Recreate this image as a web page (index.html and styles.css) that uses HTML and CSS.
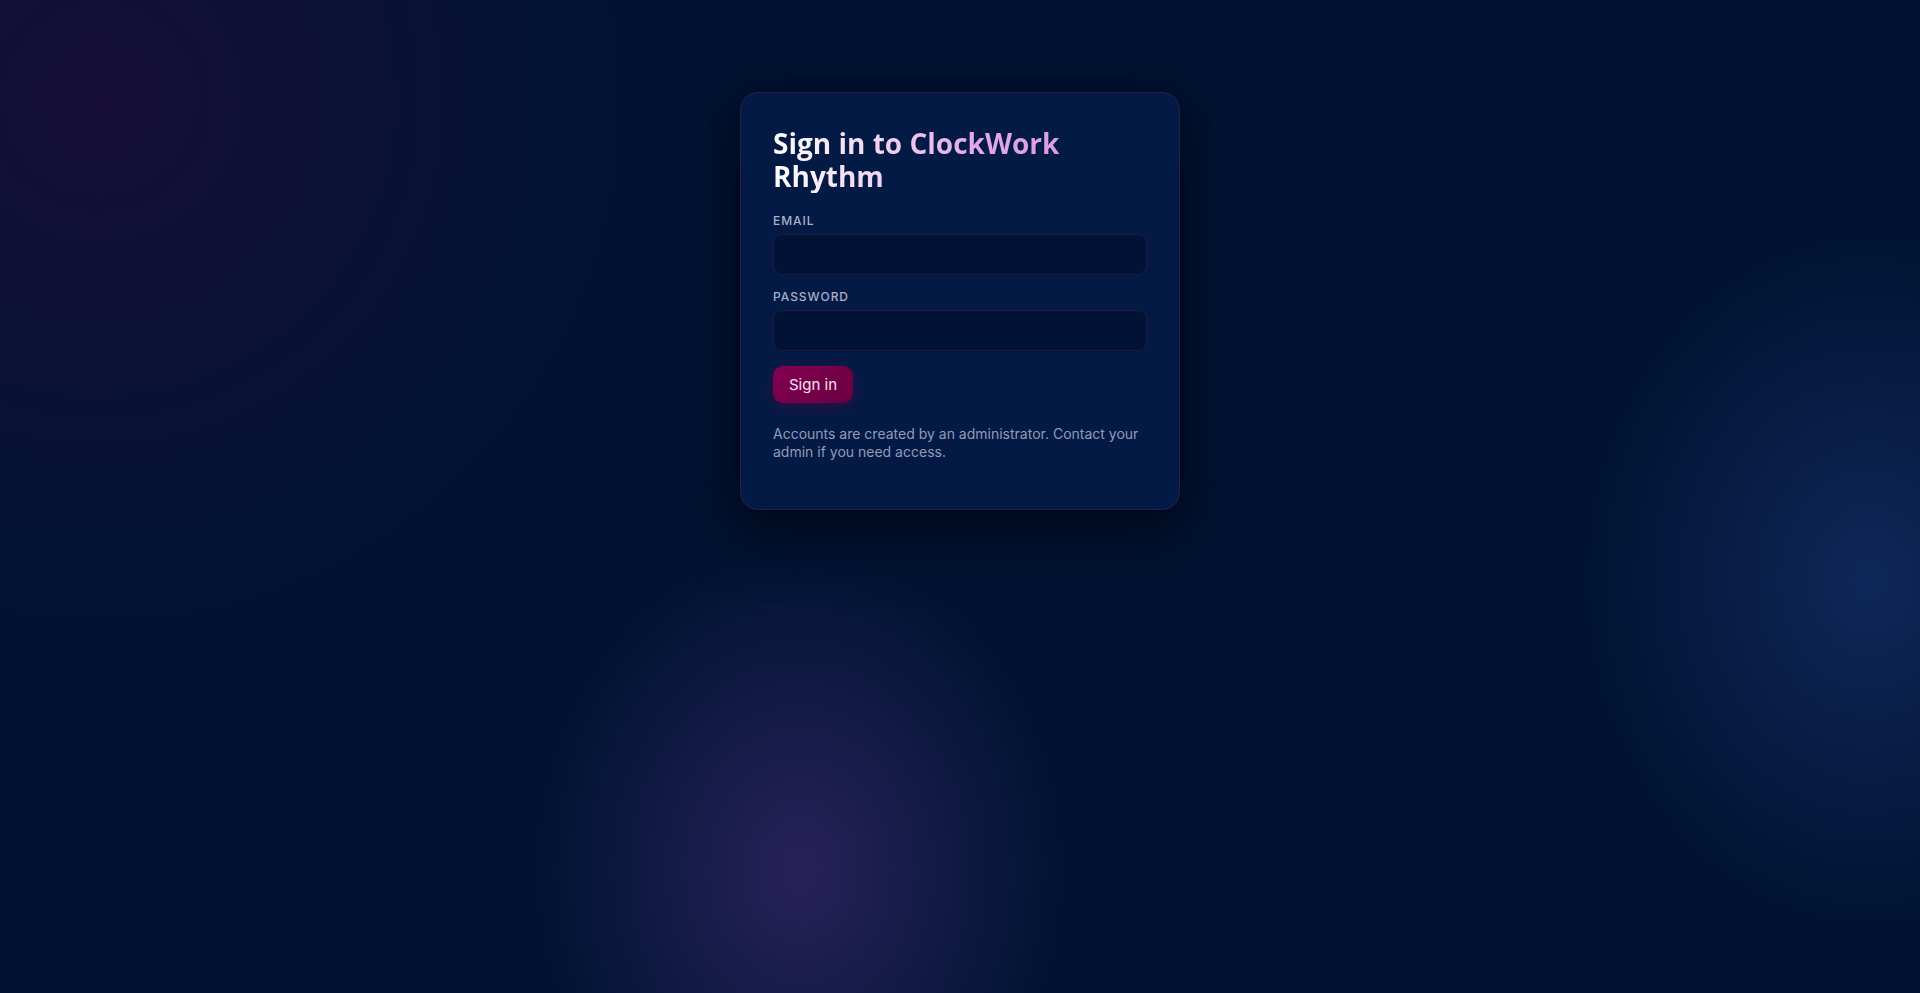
FILE: index.html
```html
<!DOCTYPE html>
<html lang="en">
<head>
<meta charset="utf-8">
<title>Sign in – ClockWork Rhythm</title>
<link rel="stylesheet" href="styles.css">
</head>
<body>
<main class="page">
  <form class="card">
    <h1 class="title">Sign in to ClockWork Rhythm</h1>
    <label class="field">
      <span class="label">EMAIL</span>
      <input class="input" type="email">
    </label>
    <label class="field">
      <span class="label">PASSWORD</span>
      <input class="input" type="password">
    </label>
    <button class="btn" type="button">Sign in</button>
    <p class="note">Accounts are created by an administrator. Contact your admin if you need access.</p>
  </form>
</main>
</body>
</html>
```

FILE: styles.css
```css
* { box-sizing: border-box; }
html, body { margin: 0; height: 100%; }
body {
  background-color: #001432;
  background-image:
    radial-gradient(ellipse 260px 320px at 800px 870px, rgba(42, 34, 92, 0.95), rgba(42, 34, 92, 0) 100%),
    radial-gradient(ellipse 280px 340px at 1870px 580px, rgba(16, 40, 92, 0.95), rgba(16, 40, 92, 0) 100%),
    radial-gradient(ellipse 520px 520px at 100px 100px, rgba(24, 14, 54, 0.95), rgba(24, 14, 54, 0) 100%);
  font-family: Inter, "Noto Sans", sans-serif;
  color: #e6e9f5;
  overflow: hidden;
}
.page {
  display: flex;
  justify-content: center;
  align-items: flex-start;
  padding-top: 92px;
  min-height: 100%;
}
.card {
  width: 440px;
  padding: 32px 32px 48px;
  border-radius: 18px;
  background: #031a45;
  border: 1px solid rgba(150, 40, 130, 0.22);
  box-shadow: 0 24px 60px rgba(0, 4, 18, 0.7), 0 0 30px rgba(0, 4, 18, 0.4);
  display: flex;
  flex-direction: column;
}
.title {
  margin: 0 0 20px;
  font-family: "Open Sans", sans-serif;
  font-weight: 700;
  font-size: 28px;
  line-height: 33px;
  background: linear-gradient(90deg, #ffffff 0%, #f3d8f3 25%, #e2a8e6 55%, #d99be0 80%);
  -webkit-background-clip: text;
  background-clip: text;
  color: transparent;
  padding-top: 2px;
}
.field {
  display: flex;
  flex-direction: column;
  margin-bottom: 14px;
}
.label {
  font-size: 12px;
  line-height: 16px;
  letter-spacing: 0.08em;
  color: #a9b0c6;
  font-weight: 500;
  margin-bottom: 5px;
}
.input {
  height: 41px;
  border-radius: 9px;
  border: 1px solid rgba(110, 30, 110, 0.35);
  background: #011335;
  color: #e6e9f5;
  outline: none;
  font: inherit;
  padding: 0 12px;
}
.btn {
  align-self: flex-start;
  margin-top: 1px;
  height: 37px;
  padding: 0 16px;
  border: 0;
  border-radius: 10px;
  background: linear-gradient(135deg, #820050, #6a0042);
  color: #f6e6f0;
  font-family: Inter, sans-serif;
  font-size: 15px;
  font-weight: 400;
  box-shadow: 0 4px 16px rgba(120, 0, 70, 0.35);
}
.note {
  margin: 22px 0 0;
  font-size: 14px;
  line-height: 18px;
  color: #929bb8;
}
```
